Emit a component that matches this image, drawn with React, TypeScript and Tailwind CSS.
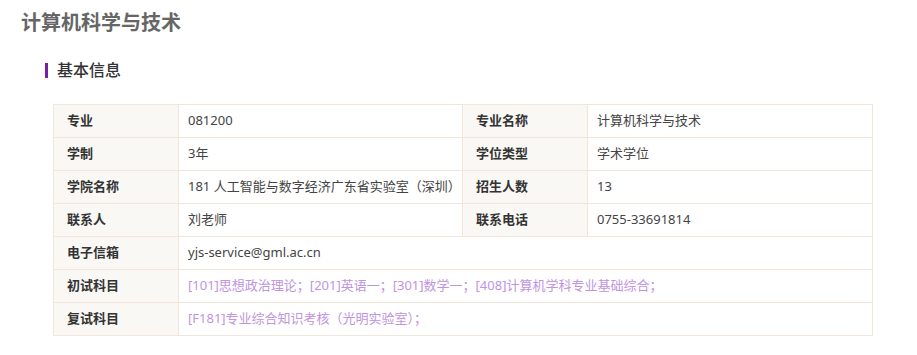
const font = { fontFamily: '"Noto Sans", "Noto Sans CJK SC", sans-serif' }

type Row = { label: string; value: string; label2?: string; value2?: string; purple?: boolean }

const rows: Row[] = [
  { label: "专业", value: "081200", label2: "专业名称", value2: "计算机科学与技术" },
  { label: "学制", value: "3年", label2: "学位类型", value2: "学术学位" },
  { label: "学院名称", value: "181 人工智能与数字经济广东省实验室（深圳）", label2: "招生人数", value2: "13" },
  { label: "联系人", value: "刘老师", label2: "联系电话", value2: "0755-33691814" },
  { label: "电子信箱", value: "yjs-service@gml.ac.cn" },
  { label: "初试科目", value: "[101]思想政治理论；[201]英语一；[301]数学一；[408]计算机学科专业基础综合；", purple: true },
  { label: "复试科目", value: "[F181]专业综合知识考核（光明实验室）；", purple: true },
]

export default function App() {
  return (
    <div className="bg-white min-h-[355px] text-[#333]" style={font}>
      <h1 className="pl-[21px] pt-[9px] text-[20px] leading-[28px] font-bold text-[#666]">计算机科学与技术</h1>

      {/* 基本信息 */}
      <div className="mt-[21px] ml-[45px] flex items-center gap-[9px]">
        <span className="w-[3px] h-[15px] bg-[#7b1fa2]" />
        <h2 className="text-[16px] leading-[24px] font-medium text-[#333]">基本信息</h2>
      </div>

      <table className="mt-[22px] ml-[53px] w-[819px] table-fixed border-collapse text-[13px]">
        <colgroup>
          <col className="w-[125px]" />
          <col className="w-[284px]" />
          <col className="w-[125px]" />
          <col className="w-[285px]" />
        </colgroup>
        <tbody>
          {rows.map((r) => (
            <tr key={r.label} className="h-[33px]">
              <td className="border border-[#f2e6da] bg-[#faf8f5] pl-[13px] font-semibold text-[#333]">{r.label}</td>
              {r.label2 ? (
                <>
                  <td className="border border-[#f2e6da] pl-[9px] text-[#444]">{r.value}</td>
                  <td className="border border-[#f2e6da] bg-[#faf8f5] pl-[13px] font-semibold text-[#333]">{r.label2}</td>
                  <td className="border border-[#f2e6da] pl-[9px] text-[#444]">{r.value2}</td>
                </>
              ) : (
                <td colSpan={3} className={`border border-[#f2e6da] pl-[9px] ${r.purple ? "text-[#c094e0]" : "text-[#444]"}`}>
                  {r.value}
                </td>
              )}
            </tr>
          ))}
        </tbody>
      </table>
    </div>
  )
}
